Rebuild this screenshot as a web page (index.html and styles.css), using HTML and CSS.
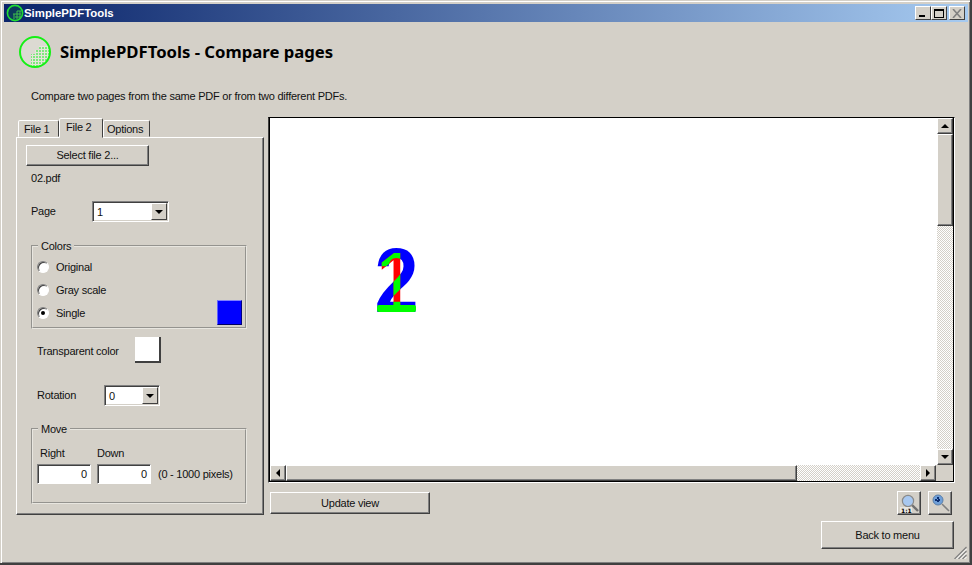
FILE: index.html
```html
<!DOCTYPE html>
<html lang="en">
<head>
    <meta charset="UTF-8">
    <title>SimplePDFTools</title>
    <link rel="stylesheet" href="styles.css">
</head>
<body>
<div class="window">

    <!-- Title bar -->
    <div class="titlebar">
        <svg class="title-icon" width="18" height="18" viewBox="0 0 18 18">
            <circle cx="9" cy="9" r="7.6" fill="#0d3a5c" stroke="#22dd33" stroke-width="1.6"/>
            <path d="M9 13h6M7 10h8M11 7h4M11 7v8M14 7v7M8 10v5" stroke="#3fbf4a" stroke-width="1" fill="none"/>
        </svg>
        <span class="title-text">SimplePDFTools</span>
        <div class="caption-btns">
            <div class="caption-btn"><span class="glyph-min"></span></div>
            <div class="caption-btn"><span class="glyph-max"></span></div>
            <div class="caption-btn close">
                <svg width="10" height="9" viewBox="0 0 10 9"><path d="M1 0l8 9M9 0l-8 9" stroke="#808080" stroke-width="1.6"/></svg>
            </div>
        </div>
    </div>

    <!-- Header -->
    <div class="header">
        <svg class="logo" width="34" height="34" viewBox="0 0 34 34">
            <defs>
                <pattern id="dots" width="3" height="3" patternUnits="userSpaceOnUse">
                    <rect width="3" height="3" fill="#e6e6da"/>
                    <rect width="2" height="2" fill="#7ee87e"/>
                </pattern>
                <clipPath id="ball"><circle cx="17" cy="17" r="15"/></clipPath>
            </defs>
            <circle cx="17" cy="17" r="15" fill="#dcdad2"/>
            <path d="M13 34V19h4v-4h4v-4h13v23z" fill="url(#dots)" clip-path="url(#ball)"/>
            <circle cx="17" cy="17" r="15" fill="none" stroke="#14f014" stroke-width="2"/>
        </svg>
        <h1>SimplePDFTools - Compare pages</h1>
    </div>
    <p class="intro">Compare two pages from the same PDF or from two different PDFs.</p>

    <div class="main">
        <!-- Left column with tabs -->
        <div class="side">
            <div class="tabs">
                <div class="tab">File 1</div>
                <div class="tab active">File 2</div>
                <div class="tab">Options</div>
            </div>
            <div class="panel">
                <button class="btn select-btn">Select file 2...</button>
                <div class="file-name">02.pdf</div>

                <div class="row page-row">
                    <span class="page-label">Page</span>
                    <div class="combo page-combo">
                        <span class="combo-value">1</span>
                        <span class="combo-arrow"></span>
                    </div>
                </div>

                <fieldset class="group colors">
                    <legend>Colors</legend>
                    <div class="radio-row"><span class="radio"></span>Original</div>
                    <div class="radio-row"><span class="radio"></span>Gray scale</div>
                    <div class="radio-row"><span class="radio checked"></span>Single<span class="swatch"></span></div>
                </fieldset>

                <div class="row transparent-row">
                    <span class="transparent-label">Transparent color</span>
                    <span class="swatch-white"></span>
                </div>

                <div class="row rotation-row">
                    <span class="rotation-label">Rotation</span>
                    <div class="combo rotation-combo">
                        <span class="combo-value">0</span>
                        <span class="combo-arrow"></span>
                    </div>
                </div>

                <fieldset class="group move">
                    <legend>Move</legend>
                    <div class="move-labels"><span>Right</span><span>Down</span></div>
                    <div class="move-inputs">
                        <div class="num">0</div>
                        <div class="num">0</div>
                        <span class="range-note">(0 - 1000 pixels)</span>
                    </div>
                </fieldset>
            </div>
        </div>

        <!-- Preview -->
        <div class="content">
            <div class="viewer">
                <div class="viewer-top">
                    <div class="page-area">
                        <svg class="digits" width="70" height="110" viewBox="0 0 70 110">
                            <defs>
                                <clipPath id="two-clip"><text class="digit-two">2</text></clipPath>
                            </defs>
                            <g transform="translate(4.5 85) scale(.88 1)">
                                <text class="digit-two" fill="#0000ff">2</text>
                                <text class="digit-one" fill="#ff0000">1</text>
                                <text class="digit-one" fill="#00ff00" clip-path="url(#two-clip)">1</text>
                            </g>
                            <rect x="7" y="78" width="39" height="7" rx="2" fill="#00ff00"/>
                        </svg>
                    </div>
                    <div class="vscroll">
                        <div class="sb-btn"><span class="arrow up"></span></div>
                        <div class="sb-thumb v"></div>
                        <div class="sb-track"></div>
                        <div class="sb-btn"><span class="arrow down"></span></div>
                    </div>
                </div>
                <div class="hscroll">
                    <div class="sb-btn"><span class="arrow left"></span></div>
                    <div class="sb-thumb h"></div>
                    <div class="sb-track"></div>
                    <div class="sb-btn"><span class="arrow right"></span></div>
                    <div class="sb-corner"></div>
                </div>
            </div>

            <div class="view-tools">
                <button class="btn update-btn">Update view</button>
                <div class="zoom-btns">
                    <button class="btn icon-btn">
                        <svg width="22" height="22" viewBox="0 0 22 22">
                            <path d="M14 13l6 6" stroke="#707070" stroke-width="2.4"/>
                            <circle cx="10" cy="9" r="5.6" fill="#a8c8f0" stroke="#8a8a8a" stroke-width="1.2"/>
                            <rect x="2" y="15" width="12" height="6" fill="#e8e6e0"/>
                            <text x="3" y="20.5" class="one-one">1:1</text>
                        </svg>
                    </button>
                    <button class="btn icon-btn">
                        <svg width="22" height="22" viewBox="0 0 22 22">
                            <path d="M13 12l7 7" stroke="#808080" stroke-width="1.6"/>
                            <circle cx="9" cy="8" r="5" fill="#6f9fd8" stroke="#5b7fa8" stroke-width="1"/>
                            <path d="M6 8h6M9 5v6" stroke="#0b2e70" stroke-width="2" stroke-dasharray="2 1"/>
                        </svg>
                    </button>
                </div>
            </div>
        </div>
    </div>

    <div class="footer">
        <button class="btn back-btn">Back to menu</button>
        <svg class="grip" width="14" height="13" viewBox="0 0 13 13">
            <path d="M13 1L1 13M13 5L5 13M13 9L9 13" stroke="#808080" stroke-width="1.2"/>
            <path d="M13 3L3 13M13 7L7 13M13 11L11 13" stroke="#fff" stroke-width="1"/>
        </svg>
    </div>
</div>
</body>
</html>
```

FILE: styles.css
```css
* {
    box-sizing: border-box;
}

html, body {
    margin: 0;
    padding: 0;
}

body {
    width: 972px;
    height: 565px;
    overflow: hidden;
    font-family: "Liberation Sans", Arial, sans-serif;
    font-size: 11px;
    letter-spacing: -0.24px;
    line-height: 14px;
    color: #111;
    background-color: #d4d0c8;
}

.window {
    width: 972px;
    height: 565px;
    padding: 4px 4px 0 4px;
    background-color: #d4d0c8;
    border-right: 2px solid #404040;
    border-bottom: 2px solid #404040;
    box-shadow: inset 1px 1px 0 #d4d0c8, inset 2px 2px 0 #fff, inset -1px -1px 0 #808080;
}

/* Title bar */
.titlebar {
    height: 18px;
    width: 964px;
    display: flex;
    align-items: center;
    padding-left: 2px;
    background: linear-gradient(to right, #0a246a, #a6caf0);
    color: white;
}

.title-icon {
    flex: none;
}

.title-text {
    font-weight: bold;
    font-size: 11.4px;
    letter-spacing: 0;
}

.caption-btns {
    margin-left: auto;
    margin-right: 3px;
    display: flex;
}

.caption-btn {
    width: 16px;
    height: 14px;
    display: flex;
    align-items: center;
    justify-content: center;
    background-color: #d4d0c8;
    border: 1px solid;
    border-color: #fff #404040 #404040 #fff;
}

.caption-btn.close {
    margin-left: 2px;
}

.glyph-min {
    width: 6px;
    height: 2px;
    margin: 6px 3px 0 0;
    background-color: #000;
}

.glyph-max {
    width: 10px;
    height: 9px;
    border: 1px solid #000;
    border-top-width: 2px;
}

/* Header */
.header {
    height: 46px;
    display: flex;
    align-items: center;
    padding-left: 14px;
    margin-top: 7px;
}

.logo {
    flex: none;
}

.header h1 {
    margin: 0 0 0 8px;
    font-family: "Noto Sans", sans-serif;
    font-size: 16.7px;
    letter-spacing: 0;
    line-height: 20px;
    font-weight: bold;
    color: #000;
}

.intro {
    margin: 14px 0 0 27px;
    height: 15px;
    line-height: 15px;
}

.main {
    display: flex;
    margin: 13px 0 0 12px;
}

/* Left column */
.side {
    width: 248px;
    flex: none;
}

.tabs {
    height: 20px;
    display: flex;
    align-items: flex-end;
    padding-left: 2px;
}

.tab {
    height: 17px;
    width: 41px;
    padding: 1px 0 0 5px;
    background-color: #d4d0c8;
    border: 1px solid;
    border-color: #fff #404040 transparent #fff;
    border-top-left-radius: 2px;
    border-top-right-radius: 2px;
}

.tab:nth-child(3) {
    width: 47px;
    padding-left: 3px;
}

.tab.active {
    width: 44px;
    height: 20px;
    margin-bottom: -1px;
    padding-left: 6px;
    position: relative;
    z-index: 1;
}

.panel {
    height: 378px;
    padding: 7px 0 0 9px;
    background-color: #d4d0c8;
    border: 1px solid;
    border-color: #fff #404040 #404040 #fff;
    box-shadow: inset -1px -1px 0 #808080;
}

.btn {
    display: block;
    padding: 0;
    font: inherit;
    letter-spacing: inherit;
    color: #111;
    background-color: #d4d0c8;
    border: 1px solid;
    border-color: #fff #404040 #404040 #fff;
    box-shadow: inset -1px -1px 0 #808080;
}

.select-btn {
    width: 123px;
    height: 21px;
    padding-bottom: 2px;
}

.file-name {
    height: 14px;
    margin: 5px 0 0 5px;
}

.row {
    display: flex;
    align-items: center;
}

.page-row {
    height: 21px;
    margin-top: 16px;
    padding-left: 5px;
}

.page-label {
    width: 61px;
    margin-top: -2px;
}

.combo {
    height: 21px;
    display: flex;
    align-items: center;
    justify-content: space-between;
    padding: 0 1px 0 3px;
    background-color: #fff;
    border: 1px solid;
    border-color: #808080 #fff #fff #808080;
    box-shadow: inset 1px 1px 0 #404040, inset -1px -1px 0 #d4d0c8;
}

.page-combo {
    width: 77px;
}

.rotation-combo {
    width: 56px;
}

.combo-value {
    margin-left: 1px;
}

.combo-arrow {
    width: 16px;
    height: 17px;
    display: flex;
    align-items: center;
    justify-content: center;
    background-color: #d4d0c8;
    border: 1px solid;
    border-color: #fff #404040 #404040 #fff;
}

.combo-arrow::after {
    content: "";
    border-style: solid;
    border-width: 4px 4px 0 4px;
    border-color: #000 transparent transparent transparent;
}

.group {
    margin: 0 0 0 5px;
    padding: 0;
    width: 216px;
    min-width: 0;
    border: 2px groove #e8e6e0;
}

.group legend {
    margin-left: 1px;
    padding: 0 3px;
    line-height: 14px;
}

.colors {
    height: 90px;
    margin-top: 17px;
    padding: 2px 0 0 4px;
}

.radio-row {
    height: 23px;
    display: flex;
    align-items: center;
}

.radio {
    width: 12px;
    height: 12px;
    margin-right: 7px;
    display: flex;
    align-items: center;
    justify-content: center;
    background-color: #fff;
    border: 1px solid;
    border-color: #808080 #fff #fff #808080;
    border-radius: 50%;
    box-shadow: inset 1px 1px 0 #404040;
}

.radio.checked::after {
    content: "";
    width: 4px;
    height: 4px;
    border-radius: 50%;
    background-color: #000;
}

.swatch {
    width: 25px;
    height: 25px;
    margin: -2px 3px -1px auto;
    background-color: #0000ff;
    border: 1px solid;
    border-color: #8080ff #00007f #000060 #6060ff;
}

.transparent-row {
    height: 26px;
    margin-top: 8px;
    padding-left: 11px;
}

.transparent-label {
    width: 98px;
    margin-top: 2px;
}

.swatch-white {
    width: 26px;
    height: 26px;
    background-color: #fff;
    border-right: 2px solid #404040;
    border-bottom: 2px solid #404040;
}

.rotation-row {
    height: 21px;
    margin-top: 22px;
    padding-left: 11px;
}

.rotation-label {
    width: 67px;
    margin-top: -2px;
}

.move {
    height: 82px;
    margin-top: 16px;
    padding: 10px 0 0 4px;
}

.move-labels {
    display: flex;
    height: 14px;
    padding-left: 3px;
}

.move-labels span {
    width: 57px;
}

.move-inputs {
    display: flex;
    align-items: center;
    margin-top: 4px;
}

.num {
    width: 54px;
    height: 20px;
    line-height: 18px;
    margin-right: 6px;
    padding-right: 3px;
    text-align: right;
    background-color: #fff;
    border: 1px solid;
    border-color: #808080 #fff #fff #808080;
    box-shadow: inset 1px 1px 0 #404040;
}

.range-note {
    margin-left: 1px;
}

/* Right column */
.content {
    width: 687px;
    margin-left: 4px;
}

.viewer {
    height: 366px;
    background-color: #fff;
    border: 1px solid;
    border-color: #000 #fff #fff #404040;
    box-shadow: inset 1px 0 0 #000, inset -1px -1px 0 #000;
}

.viewer-top {
    display: flex;
    height: 347px;
    padding: 0 1px;
}

.page-area {
    flex: 1;
    padding: 109px 0 0 100px;
}

.digits {
    display: block;
}

.digit-two, .digit-one {
    font-family: "Liberation Sans", sans-serif;
    letter-spacing: 0;
}

.digit-two {
    font-size: 90px;
    font-weight: bold;
}

.digit-one {
    font-size: 86px;
    stroke-width: 0.6px;
}

.vscroll {
    width: 16px;
    display: flex;
    flex-direction: column;
}

.hscroll {
    height: 16px;
    display: flex;
    margin: 0 1px;
}

.sb-btn {
    width: 16px;
    height: 16px;
    flex: none;
    display: flex;
    align-items: center;
    justify-content: center;
    background-color: #d4d0c8;
    border: 1px solid;
    border-color: #fff #404040 #404040 #fff;
    box-shadow: inset -1px -1px 0 #808080;
}

.sb-thumb {
    flex: none;
    background-color: #d4d0c8;
    border: 1px solid;
    border-color: #fff #404040 #404040 #fff;
    box-shadow: inset -1px -1px 0 #808080;
}

.sb-thumb.v {
    height: 92px;
}

.sb-thumb.h {
    width: 511px;
}

.sb-track {
    flex: 1;
    background: repeating-conic-gradient(#d4d0c8 0 25%, #fff 0 50%) 0 0 / 2px 2px;
}

.sb-corner {
    width: 17px;
    flex: none;
    background-color: #d4d0c8;
}

.arrow {
    width: 0;
    height: 0;
    border-style: solid;
}

.arrow.up {
    border-width: 0 4px 4px 4px;
    border-color: transparent transparent #000 transparent;
}

.arrow.down {
    border-width: 4px 4px 0 4px;
    border-color: #000 transparent transparent transparent;
}

.arrow.left {
    border-width: 4px 4px 4px 0;
    border-color: transparent #000 transparent transparent;
}

.arrow.right {
    border-width: 4px 0 4px 4px;
    border-color: transparent transparent transparent #000;
}

.view-tools {
    height: 25px;
    display: flex;
    align-items: center;
    justify-content: space-between;
    margin-top: 7px;
    padding: 0 3px 0 2px;
}

.update-btn {
    width: 160px;
    height: 22px;
    margin-top: 1px;
}

.zoom-btns {
    display: flex;
    gap: 7px;
}

.icon-btn {
    width: 24px;
    height: 24px;
}

.icon-btn svg {
    display: block;
}

.one-one {
    font-family: "DejaVu Sans", sans-serif;
    font-size: 6px;
    font-weight: bold;
    letter-spacing: 0;
    fill: #000;
}

/* Footer */
.footer {
    display: flex;
    justify-content: flex-end;
    height: 48px;
    padding: 6px 12px 0 0;
    position: relative;
}

.back-btn {
    width: 133px;
    height: 28px;
}

.grip {
    position: absolute;
    right: -1px;
    bottom: 4px;
}
```
